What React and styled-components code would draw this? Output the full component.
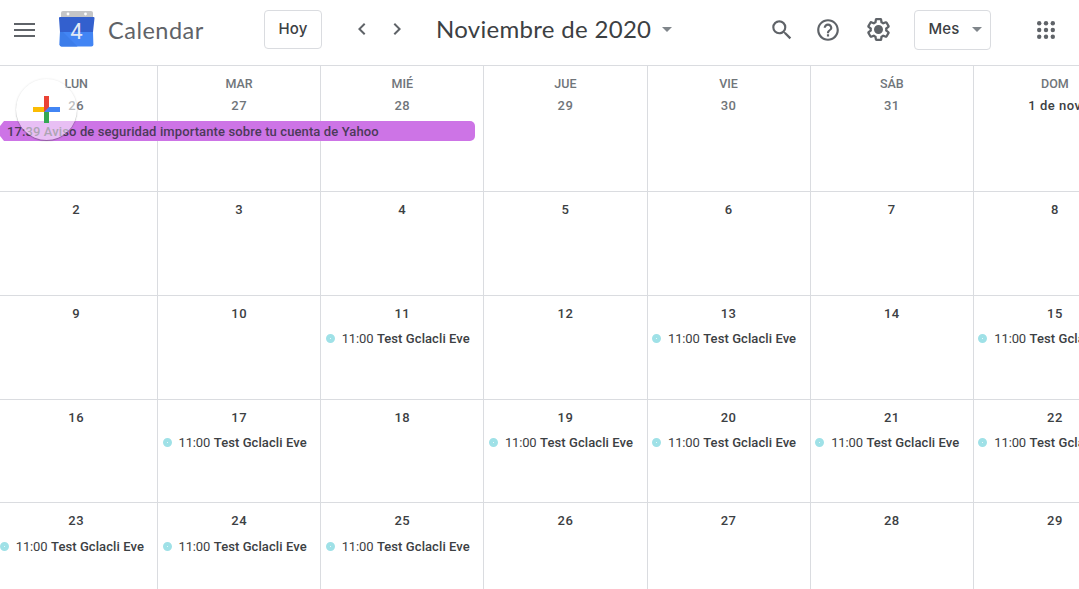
import React from 'react';
import styled, { createGlobalStyle } from 'styled-components';

const GlobalStyle = createGlobalStyle`
  * { box-sizing: border-box; }
  html, body { margin: 0; height: 100%; overflow: hidden; background: #fff; }
  body { font-family: Roboto, "Liberation Sans", sans-serif; color: #3c4043; }
`;

const Page = styled.div`
  position: relative;
  width: 1079px;
  height: 589px;
  overflow: hidden;
  display: flex;
  flex-direction: column;
`;

const Header = styled.header`
  flex: none;
  height: 66px;
  padding: 0 24px 6px 12px;
  display: flex;
  align-items: center;
  border-bottom: 1px solid #dadce0;
  color: #5f6368;
  white-space: nowrap;
`;

const IconButton = styled.button`
  display: flex;
  flex: none;
  align-items: center;
  justify-content: center;
  width: ${(p) => p.$width}px;
  height: 28px;
  margin-left: ${(p) => p.$gap || 0}px;
  padding: 0 0 ${(p) => p.$lift || 0}px;
  border: 0;
  background: none;
  color: inherit;
  svg { flex: none; fill: currentColor; }
`;

const Brand = styled.div`
  display: flex;
  flex: none;
  align-items: center;
  width: 205px;
  height: 38px;
  margin-left: 22px;
`;

const BrandName = styled.span`
  margin: 0 0 0 12px;
  font: 400 23.5px/28px Lato, sans-serif;
  letter-spacing: 0.5px;
`;

const OutlineButton = styled.button`
  display: flex;
  flex: none;
  align-items: center;
  width: ${(p) => p.$width}px;
  height: ${(p) => p.$height}px;
  margin-left: ${(p) => p.$gap}px;
  padding: 0 0 ${(p) => p.$lift}px 13.5px;
  border: 1px solid #dadce0;
  border-radius: 4px;
  background: #fff;
  color: #3c4043;
  font: 500 15px/20px Inter, sans-serif;
  letter-spacing: 0.1px;
`;

const Month = styled.h1`
  flex: none;
  width: 218px;
  margin: 0 0 2px 27px;
  color: #3c4043;
  font: 400 24px/30px Lato, sans-serif;
  letter-spacing: 0.3px;
`;

const Caret = styled.span`
  flex: none;
  width: 0;
  height: 0;
  margin: ${(p) => p.$top || 0}px 0 0 ${(p) => p.$gap}px;
  border: 5px solid transparent;
  border-width: 5px 5px 0;
  border-top-color: #80868b;
`;

const Week = styled.div`
  flex: none;
  display: grid;
  grid-template-columns: 162.75px repeat(6, 163.17px);
  width: 1142px;
  height: ${(p) => p.$height}px;
  margin-left: -4.7px;
`;

const Day = styled.div`
  min-width: 0;
  padding-top: ${(p) => (p.$first ? 9 : 10)}px;
  border: solid #dadce0;
  border-width: 0 1px 1px 0;
  text-align: center;
`;

const Weekday = styled.div`
  height: 23px;
  color: #70757a;
  font-size: 12.5px;
  font-weight: 500;
  line-height: 18px;
`;

const DayNumber = styled.div`
  height: 16px;
  color: ${(p) => (p.$muted ? '#70757a' : '#3c4043')};
  font-size: 13px;
  font-weight: 500;
  line-height: 16px;
  letter-spacing: 0.5px;
  white-space: nowrap;
`;

const Event = styled.div`
  display: flex;
  align-items: center;
  height: 20px;
  margin-top: ${(p) => (p.$last ? 8 : 7)}px;
  padding-left: 4.5px;
  font-size: 13px;
  line-height: 20px;
  text-align: left;
  white-space: nowrap;
`;

const Dot = styled.i`
  flex: none;
  width: 9px;
  height: 9px;
  margin: 0 7px 1px 0;
  border: 4px solid #9fe1e7;
  border-radius: 50%;
`;

const EventTime = styled.span`
  width: 35.2px;
  letter-spacing: -0.15px;
`;

const EventTitle = styled.span`
  font-weight: 500;
  letter-spacing: 0.08px;
`;

const SpanningEvent = styled.div`
  position: absolute;
  left: 0;
  top: 121px;
  width: 475px;
  height: 20px;
  padding: 1px 0 0 7px;
  border-radius: 0 5px 5px 0;
  background: #cd74e6;
  clip-path: polygon(4px 0, 100% 0, 100% 100%, 4px 100%, 0 75%, 0 25%);
  color: #4b3a59;
  font-size: 13px;
  font-weight: 500;
  line-height: 20px;
  letter-spacing: 0.11px;
  white-space: nowrap;
`;

const CreateButton = styled.button`
  position: absolute;
  left: 16px;
  top: 79px;
  display: flex;
  align-items: center;
  justify-content: center;
  width: 61px;
  height: 61px;
  padding: 0;
  border: 0;
  border-radius: 50%;
  background: rgba(255, 255, 255, 0.54);
  box-shadow: 0 1px 1px rgba(60, 64, 67, 0.4), 0 0 2px rgba(60, 64, 67, 0.15);
`;

const MenuIcon = () => (
  <svg width="22" height="14" viewBox="0 0 22 14">
    <path d="M0 0h21v2H0zM0 6h21v2H0zM0 12h21v2H0z" />
  </svg>
);

const CalendarLogo = () => (
  <svg width="37" height="37" viewBox="0 0 37 37">
    <path fill="#c4c5c7" d="M4 0h28q2 0 2 2v7H2V2q0-2 2-2z" />
    <circle cx="9" cy="3" r="1.4" fill="#fff" />
    <circle cx="26.5" cy="3" r="1.4" fill="#fff" />
    <path fill="#3360ce" d="M1 6h33.5q1.2 0 1 1.3L34 21H1L0 7.3Q-.2 6 1 6z" />
    <path fill="#4285f4" d="M1 21h33l.4 12.5q0 2-2 2H2.6q-2 0-2-2z" />
    <path fill="#3c7dea" d="M1 21h3l14.5 14.5H2.6q-2 0-2-2z" />
    <text x="17.5" y="28.3" textAnchor="middle" fill="#e2e9f5" fontFamily="Roboto, sans-serif" fontSize="22">4</text>
  </svg>
);

const Icon = ({ size = 24, d }) => (
  <svg width={size} height={size} viewBox="0 0 24 24"><path d={d} /></svg>
);

const paths = {
  prev: 'M15.41 7.41 14 6l-6 6 6 6 1.41-1.41L10.83 12z',
  next: 'M10 6 8.59 7.41 13.17 12l-4.58 4.59L10 18l6-6z',
  search: 'M15.5 14h-.79l-.28-.27A6.471 6.471 0 0 0 16 9.5 6.5 6.5 0 1 0 9.5 16c1.61 0 3.09-.59 4.23-1.57l.27.28v.79l5 4.99L20.49 19l-4.99-5zm-6 0C7.01 14 5 11.99 5 9.5S7.01 5 9.5 5 14 7.01 14 9.5 11.99 14 9.5 14z',
  help: 'M11 18h2v-2h-2v2zm1-16C6.48 2 2 6.48 2 12s4.48 10 10 10 10-4.48 10-10S17.52 2 12 2zm0 18c-4.41 0-8-3.59-8-8s3.59-8 8-8 8 3.59 8 8-3.59 8-8 8zm0-14c-2.21 0-4 1.79-4 4h2c0-1.1.9-2 2-2s2 .9 2 2c0 2-3 1.75-3 5h2c0-2.25 3-2.5 3-5 0-2.21-1.79-4-4-4z',
  gear: 'M13.85 22.25h-3.7c-.74 0-1.36-.54-1.45-1.27l-.27-1.89c-.27-.14-.53-.29-.79-.46l-1.8.72c-.7.26-1.47-.03-1.81-.65L2.2 15.53c-.35-.66-.2-1.44.36-1.88l1.53-1.19c-.01-.15-.02-.3-.02-.46 0-.15.01-.31.02-.46l-1.52-1.19c-.59-.45-.74-1.26-.37-1.88l1.85-3.19c.34-.62 1.11-.9 1.79-.63l1.81.73c.26-.17.52-.32.78-.46l.27-1.91c.09-.7.71-1.25 1.44-1.25h3.7c.74 0 1.36.54 1.45 1.27l.27 1.89c.27.14.53.29.79.46l1.8-.72c.71-.26 1.48.03 1.82.65l1.84 3.18c.36.66.2 1.44-.36 1.88l-1.52 1.19c.01.15.02.3.02.46s-.01.31-.02.46l1.52 1.19c.56.45.72 1.23.37 1.86l-1.86 3.22c-.34.62-1.11.9-1.8.63l-1.8-.72c-.26.17-.52.32-.78.46l-.27 1.91c-.1.68-.72 1.22-1.46 1.22zm-3.23-2h2.76l.37-2.55.53-.22c.44-.18.88-.44 1.34-.78l.45-.34 2.38.96 1.38-2.4-2.03-1.58.07-.56c.03-.26.06-.51.06-.78s-.03-.53-.06-.78l-.07-.56 2.03-1.58-1.39-2.4-2.39.96-.45-.35c-.42-.32-.87-.58-1.33-.77l-.52-.22-.37-2.55h-2.76l-.37 2.55-.53.21c-.44.19-.88.44-1.34.79l-.45.33-2.38-.95-1.39 2.39 2.03 1.58-.07.56a7 7 0 0 0-.06.79c0 .26.02.53.06.78l.07.56-2.03 1.58 1.38 2.4 2.39-.96.45.35c.43.33.86.58 1.33.77l.53.22.38 2.55zM12 8a4 4 0 1 0 0 8 4 4 0 0 0 0-8z',
};

const AppsIcon = () => (
  <svg width="18" height="18" viewBox="0 0 18 18">
    {[2.2, 9, 15.8].map((y) => [2.2, 9, 15.8].map((x) => <circle key={`${x}-${y}`} cx={x} cy={y} r="2.2" />))}
  </svg>
);

const PlusIcon = () => (
  <svg width="27" height="27" viewBox="0 0 27 27">
    <path fill="#fbbc04" d="M0 11h13v5H0z" />
    <path fill="#4285f4" d="M14 11h13v5H11z" />
    <path fill="#34a853" d="M11 16h5v11h-5z" />
    <path fill="#ea4335" d="M11 0h5v11l-5 5z" />
  </svg>
);

const names = ['LUN', 'MAR', 'MIÉ', 'JUE', 'VIE', 'SÁB', 'DOM'];
const weeks = [
  { height: 126, days: [26, 27, 28, 29, 30, 31, '1 de nov'] },
  { height: 104, days: [2, 3, 4, 5, 6, 7, 8] },
  { height: 104, days: [9, 10, 11, 12, 13, 14, 15] },
  { height: 103, days: [16, 17, 18, 19, 20, 21, 22] },
  { height: 104, days: [23, 24, 25, 26, 27, 28, 29] },
];
const eventDays = { 2: [11, 13, 15], 3: [17, 19, 20, 21, 22], 4: [23, 24, 25] };

export default function App() {
  return (
    <Page>
      <GlobalStyle />
      <Header>
        <IconButton $width={25} aria-label="Menú"><MenuIcon /></IconButton>
        <Brand>
          <CalendarLogo />
          <BrandName>Calendar</BrandName>
        </Brand>
        <OutlineButton $width={58} $height={39} $gap={0} $lift={1}>Hoy</OutlineButton>
        <IconButton $width={24} $gap={27.5} $lift={2} aria-label="Anterior"><Icon d={paths.prev} /></IconButton>
        <IconButton $width={24} $gap={11.5} $lift={2} aria-label="Siguiente"><Icon d={paths.next} /></IconButton>
        <Month>Noviembre de 2020</Month>
        <Caret $gap={8} />
        <IconButton $width={26} $gap={97} aria-label="Buscar"><Icon size={26} d={paths.search} /></IconButton>
        <IconButton $width={26} $gap={20} aria-label="Ayuda"><Icon size={26} d={paths.help} /></IconButton>
        <IconButton $width={26} $gap={24} aria-label="Configuración"><Icon size={27} d={paths.gear} /></IconButton>
        <OutlineButton $width={77} $height={40} $gap={23} $lift={1}>Mes<Caret $gap={12.5} $top={1} /></OutlineButton>
        <IconButton $width={18} $gap={46} aria-label="Aplicaciones"><AppsIcon /></IconButton>
      </Header>
      {weeks.map((week, w) => (
        <Week key={w} $height={week.height}>
          {week.days.map((day, d) => (
            <Day key={d} $first={w === 0}>
              {w === 0 && <Weekday>{names[d]}</Weekday>}
              <DayNumber $muted={w === 0 && d < 6}>{day}</DayNumber>
              {eventDays[w]?.includes(day) && (
                <Event $last={w === 4}>
                  <Dot />
                  <EventTime>11:00</EventTime>
                  <EventTitle>Test Gclacli Eve</EventTitle>
                </Event>
              )}
            </Day>
          ))}
        </Week>
      ))}
      <SpanningEvent>17:39 Aviso de seguridad importante sobre tu cuenta de Yahoo</SpanningEvent>
      <CreateButton aria-label="Crear"><PlusIcon /></CreateButton>
    </Page>
  );
}
